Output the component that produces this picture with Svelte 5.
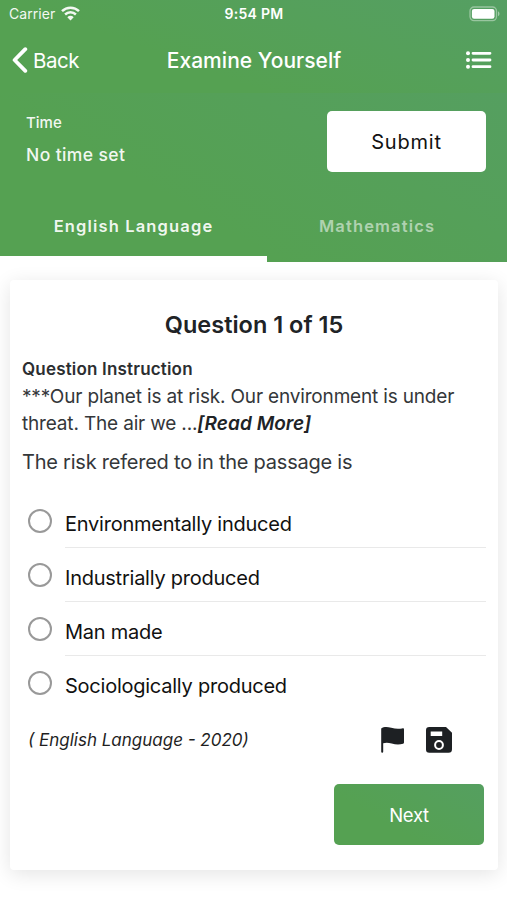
<script>
  const options = [
    'Environmentally induced',
    'Industrially produced',
    'Man made',
    'Sociologically produced',
  ];
  let selected = $state(-1);
</script>

<div class="screen">
  <header class="top">
    <div class="status">
      <div class="carrier">
        <span>Carrier</span>
        <svg width="19" height="15" viewBox="0 0 19 15" fill="none" stroke="#fff" stroke-width="2.5">
          <path d="M1 5.2a12.2 12.2 0 0 1 17 0" />
          <path d="M4.1 8.5a7.8 7.8 0 0 1 10.8 0" />
          <path d="M9.5 14.5 6.3 11.2a4.7 4.7 0 0 1 6.4 0Z" fill="#fff" stroke="none" />
        </svg>
      </div>
      <span class="clock">9:54 PM</span>
      <svg class="battery" width="32" height="16" viewBox="0 0 32 16">
        <rect x="1" y="1" width="26.5" height="13.6" rx="4" fill="none" stroke="#fff" stroke-opacity=".4" stroke-width="1.3" />
        <rect x="2.9" y="2.9" width="22.6" height="9.8" rx="2.2" fill="#fff" />
        <path d="M29 5.3v5a2.8 2.8 0 0 0 0-5Z" fill="#fff" fill-opacity=".45" />
      </svg>
    </div>
    <nav class="bar">
      <button class="back">
        <svg width="16" height="26" viewBox="0 0 16 26" fill="none" stroke="#fff" stroke-width="3.8" stroke-linecap="round" stroke-linejoin="round">
          <path d="M13.3 2.2 2.6 13l10.7 10.8" />
        </svg>
        <span>Back</span>
      </button>
      <h1>Examine Yourself</h1>
      <button class="menu" aria-label="Questions">
        <svg width="28" height="20" viewBox="0 0 28 20" fill="#fff">
          <circle cx="3" cy="3.3" r="2" /><circle cx="3" cy="10" r="2" /><circle cx="3" cy="16.7" r="2" />
          <path d="M8 3.3h17M8 10h17M8 16.7h17" stroke="#fff" stroke-width="2.8" stroke-linecap="round" />
        </svg>
      </button>
    </nav>
  </header>

  <div class="panel">
    <section class="info">
      <div>
        <div class="time-label">Time</div>
        <div class="time-value">No time set</div>
      </div>
      <button class="submit">Submit</button>
    </section>

    <div class="tabs">
      <button class="tab active">English Language</button>
      <button class="tab">Mathematics</button>
    </div>
  </div>

  <main class="card">
    <h2>Question 1 of 15</h2>
    <h3>Question Instruction</h3>
    <p class="passage">***Our planet is at risk. Our environment is under<br />threat. The air we ...<b>[Read More]</b></p>
    <p class="question">The risk refered to in the passage is</p>

    <ul>
      {#each options as option, i}
        <li>
          <button class="radio" class:on={selected === i} aria-label={option} onclick={() => (selected = i)}></button>
          <span class="label">{option}</span>
        </li>
      {/each}
    </ul>

    <div class="meta">
      <i>( English Language - 2020)</i>
      <svg class="flag" width="26" height="28" viewBox="0 0 26 28" fill="#1d2023">
        <path d="M1.2 2.400C3.800.8 7 .7 11.200 1.800c4.200 1.200 7.600 1.300 10.900.6 1.300-.4 1.900 0 1.900 1v13.200c0 .7-.3 1-.9 1.200-3.600 1.100-7.300 1-11.400-.2-3.300-1.100-6-1.200-8.500-.3v8.400a1 1 0 0 1-2 0Z" />
      </svg>
      <svg class="save" width="28" height="28" viewBox="0 0 28 28">
        <path fill="#1d2023" fill-rule="evenodd" d="M4.300 1h16.700L27 6.700v16.500a3.500 3.500 0 0 1-3.500 3.500H4.300A3.300 3.300 0 0 1 1 23.400V4.300A3.300 3.300 0 0 1 4.300 1ZM5.700 5.500h11.500v4.400H5.700Z" />
        <circle cx="14" cy="19" r="3.900" fill="none" stroke="#fff" stroke-width="2" />
      </svg>
    </div>

    <button class="next">Next</button>
  </main>
</div>

<style>
  :global(body) { margin: 0; background: #fff; }
  .screen {
    width: 507px; height: 900px; overflow: hidden; background: #fff;
    font-family: Inter, "Liberation Sans", sans-serif; color: #202326;
    display: flex; flex-direction: column;
  }
  button { border: 0; padding: 0; margin: 0; font: inherit; background: none; color: inherit; }
  h1, h2, h3, p, ul { margin: 0; padding: 0; white-space: nowrap; }
  .top { height: 93px; background: linear-gradient(20deg, #55a152 35%, #559f63 100%); color: #fff; }
  .status { height: 27px; display: grid; grid-template-columns: 1fr auto 1fr; align-items: center; padding: 0 8px 0 9px; }
  .carrier { display: flex; align-items: center; gap: 6px; font-size: 14px; letter-spacing: .05px; opacity: .93; }
  .clock { font-size: 14px; font-weight: 600; letter-spacing: .3px; }
  .battery { justify-self: end; margin-right: -2px; }
  .bar { height: 66px; display: grid; grid-template-columns: 1fr auto 1fr; align-items: center; padding: 0 14px 0 15px; box-sizing: border-box; }
  .back { justify-self: start; margin-left: -3px; display: flex; align-items: center; gap: 5px; font-size: 20.5px; letter-spacing: -.5px; }
  h1 { font-size: 21px; font-weight: 500; letter-spacing: .04px; }
  .menu { justify-self: end; display: flex; }
  .panel { background: linear-gradient(30deg, #55a152 35%, #559f60 100%); }
  .info {
    height: 97px; box-sizing: border-box; padding: 18px 21px 0 26px; color: #fff;
    display: flex; justify-content: space-between;
  }
  .time-label { font-size: 15px; line-height: 24px; font-weight: 500; opacity: .92; }
  .time-value { font-size: 17.5px; line-height: 24px; font-weight: 500; letter-spacing: .4px; margin-top: 8px; opacity: .92; }
  .submit { width: 159px; height: 61px; border-radius: 5px; background: #fff; color: #111; font-size: 20px; letter-spacing: .8px; }
  .tabs { height: 72px; display: flex; }
  .tab { height: 72px; width: 267px; box-sizing: border-box; padding-top: 6px; color: rgba(255,255,255,.55); font-size: 16.5px; font-weight: 600; letter-spacing: 1.15px; }
  .tab:last-child { width: 240px; padding-right: 20px; border-bottom: 6px solid transparent; }
  .tab.active { color: rgba(255,255,255,.93); border-bottom: 6px solid #fff; }
  .card {
    margin: 18px 9px 0 10px; height: 590px; flex: none; box-sizing: border-box; padding: 30px 12px 0;
    border-radius: 4px; background: #fff; box-shadow: 0 4px 20px rgba(0,0,0,.11);
  }
  h2 { font-size: 23.5px; line-height: 30px; font-weight: 600; text-align: center; letter-spacing: 0; }
  h3 { margin-top: 17px; font-size: 17px; line-height: 24px; font-weight: 600; letter-spacing: .18px; color: #2b2e31; }
  .passage { margin-top: 2px; font-size: 19px; line-height: 27px; letter-spacing: -.17px; color: #34373a; }
  .passage b { font-style: italic; font-weight: 600; letter-spacing: .05px; color: #202326; }
  .question { margin-top: 11px; font-size: 20px; line-height: 28px; letter-spacing: -.23px; color: #34373a; }
  ul { list-style: none; margin-top: 18px; }
  li { height: 54px; display: flex; padding-left: 6px; }
  .radio { width: 24px; height: 24px; flex: none; margin-top: 15px; box-sizing: border-box; border: 2px solid #999; border-radius: 50%; }
  .radio.on { border: 7px solid #55a152; }
  .label { flex: 1; margin-left: 13px; height: 54px; box-sizing: border-box; padding-top: 6px; border-bottom: 1px solid #e9e9e9; font-size: 20px; line-height: 48px; letter-spacing: -.24px; color: #111; }
  li:last-child .label { border: 0; }
  .meta { height: 30px; margin-top: 15px; display: flex; align-items: center; padding-left: 6px; }
  .meta i { font-size: 17px; color: #1f1f1f; white-space: nowrap; }
  .flag { margin-left: auto; }
  .save { margin: 0 33px 0 19px; }
  .next { display: block; margin: 29px 2px 0 auto; width: 150px; height: 61px; border-radius: 5px; color: #fff; font-size: 18.5px; letter-spacing: -.3px; background: linear-gradient(30deg, #55a152 35%, #559f60 100%); }
</style>
